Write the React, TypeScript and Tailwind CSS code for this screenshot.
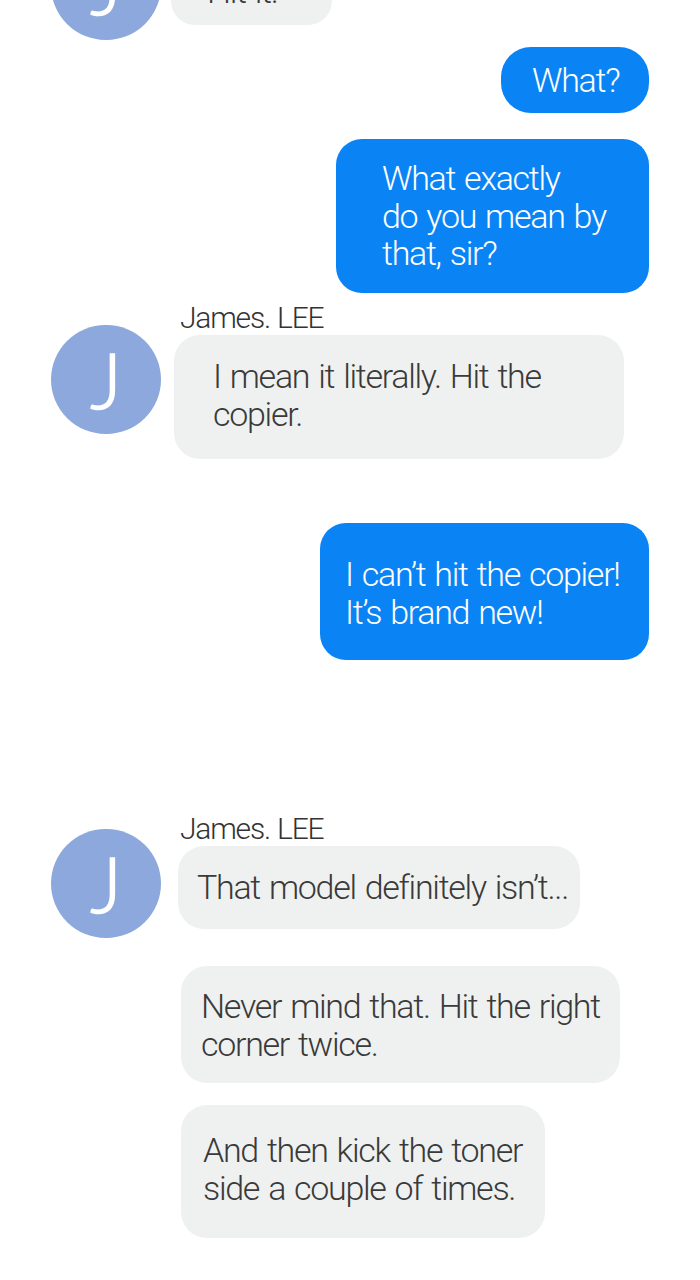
import type { ReactNode } from 'react'

const font = { fontFamily: 'Roboto, sans-serif' }

function Avatar() {
  return (
    <div className="w-[110px] h-[109px] shrink-0 rounded-full bg-[#8ca8dc] flex items-center justify-center text-white text-[76px] font-light leading-none [-webkit-text-stroke:1.5px_white]" style={{ fontFamily: 'Lato, sans-serif' }}>
      J
    </div>
  )
}

function Name() {
  return <div className="text-[30px] leading-[34px] tracking-[-1.2px] [word-spacing:1px] font-light text-[#333]">James. LEE</div>
}

function Sent({ className, children }: { className: string; children: ReactNode }) {
  return (
    <div className={`self-end mr-[51px] bg-[#0a84f5] text-white text-[34px] leading-[37.5px] tracking-[-1.3px] [word-spacing:2px] font-light ${className}`}>
      {children}
    </div>
  )
}

function Received({ className, children }: { className: string; children: ReactNode }) {
  return (
    <div className={`bg-[#eff1f1] text-[#3a3a3a] text-[34px] leading-[37.5px] tracking-[-1.3px] [word-spacing:2px] font-light ${className}`}>
      {children}
    </div>
  )
}

export default function App() {
  return (
    <div className="h-[1280px] overflow-hidden bg-white flex flex-col" style={font}>
      {/* Previous message, cut off by the top of the screen */}
      <div className="flex items-start ml-[51px] mt-[-69px]">
        <Avatar />
        <Received className="ml-[10px] mt-[1px] w-[161px] h-[93px] rounded-[24px] pl-[36px] pt-[41px]">Hit it.</Received>
      </div>

      <Sent className="mt-[7px] w-[148px] h-[66px] rounded-[30px] pl-[31px] pt-[15px]">What?</Sent>
      <Sent className="mt-[26px] w-[313px] h-[154px] rounded-[26px] pl-[46px] pt-[21px]">
        What exactly
        <br />
        do you mean by
        <br />
        that, sir?
      </Sent>

      <div className="flex items-start ml-[51px] mt-[32px]">
        <Avatar />
        <div className="ml-[13px] mt-[-24px]">
          <div className="ml-[6px]"><Name /></div>
          <Received className="w-[450px] h-[124px] rounded-[26px] pl-[39px] pt-[23px]">
            I mean it literally. Hit the
            <br />
            copier.
          </Received>
        </div>
      </div>

      <Sent className="mt-[64px] w-[329px] h-[137px] rounded-[26px] pl-[25px] pt-[33px]">
        I can’t hit the copier!
        <br />
        It’s brand new!
      </Sent>

      <div className="flex items-start ml-[51px] mt-[169px]">
        <Avatar />
        <div className="ml-[17px] mt-[-17px]">
          <div className="ml-[2px]"><Name /></div>
          <Received className="w-[402px] h-[83px] rounded-[26px] pl-[19px] pt-[23px] whitespace-nowrap">That model definitely isn’t...</Received>
        </div>
      </div>

      <Received className="ml-[181px] mt-[28px] w-[439px] h-[117px] rounded-[26px] pl-[20px] pt-[22px]">
        Never mind that. Hit the right
        <br />
        corner twice.
      </Received>
      <Received className="ml-[181px] mt-[22px] w-[364px] h-[133px] rounded-[26px] pl-[22px] pt-[27px]">
        And then kick the toner
        <br />
        side a couple of times.
      </Received>
    </div>
  )
}
